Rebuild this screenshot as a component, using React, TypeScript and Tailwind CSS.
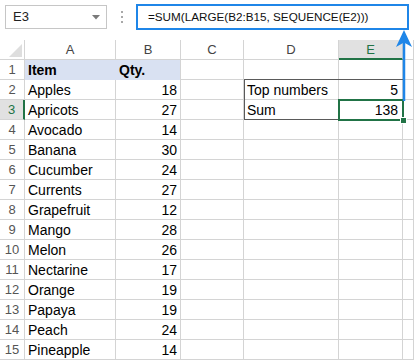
import React from "react";

const data: [string, string | number][] = [
  ["Apples", 18],
  ["Apricots", 27],
  ["Avocado", 14],
  ["Banana", 30],
  ["Cucumber", 24],
  ["Currents", 27],
  ["Grapefruit", 12],
  ["Mango", 28],
  ["Melon", 26],
  ["Nectarine", 17],
  ["Orange", 19],
  ["Papaya", 19],
  ["Peach", 24],
  ["Pineapple", 14],
];

const cell = "h-[20px] border-r border-b border-[#d4d4d4] leading-[20px] text-[14px] text-black overflow-hidden whitespace-nowrap";

export default function App() {
  const colLetters = ["A", "B", "C", "D", "E", ""];
  return (
    <div className="relative w-[414px] h-[360px] overflow-hidden bg-white font-['Liberation_Sans',Arial,sans-serif]">
      {/* top bar */}
      <div className="h-[40px] flex items-start">
        <div className="ml-[5px] mt-[5px] w-[102px] h-[24px] border border-[#c6c6c6] flex items-center justify-between pl-[7px] pr-[6px]">
          <span className="text-[13px] text-[#222]">E3</span>
          <svg width="8" height="5" viewBox="0 0 8 5">
            <polygon points="0,0 8,0 4,4.5" fill="#7a7a7a" />
          </svg>
        </div>
        <div className="w-[29px] h-[34px] flex flex-col items-center justify-center gap-[3px]">
          <div className="w-[2px] h-[2px] bg-[#a8a8a8]" />
          <div className="w-[2px] h-[2px] bg-[#a8a8a8]" />
          <div className="w-[2px] h-[2px] bg-[#a8a8a8]" />
        </div>
        <div className="mt-[4px] w-[273px] h-[26px] border-2 border-[#1f86e8] flex items-center pl-[10px]">
          <span className="text-[11.7px] text-[#111] whitespace-nowrap">=SUM(LARGE(B2:B15, SEQUENCE(E2)))</span>
        </div>
      </div>

      {/* sheet */}
      <div className="grid grid-cols-[25px_91px_65px_63px_95px_64px_1fr]">
        {/* header row */}
        <div className="h-[20px] border-r border-b border-[#d4d4d4] relative">
          <svg className="absolute left-0 top-0" width="25" height="20" viewBox="0 0 25 20">
            <polygon points="22,4 22,17 9,17" fill="#dedede" />
          </svg>
        </div>
        {colLetters.map((c, i) => (
          <div
            key={i}
            className={
              c === "E"
                ? "h-[20px] border-r border-[#d4d4d4] bg-[#e1e1e1] border-b-2 border-b-[#217346] text-center text-[13px] leading-[19px] text-[#217346]"
                : "h-[20px] border-r border-b border-[#d4d4d4] text-center text-[13px] leading-[20px] text-[#444]"
            }
          >
            {c}
          </div>
        ))}

        {/* row 1 */}
        <div className="h-[20px] border-r border-b border-[#d4d4d4] text-center text-[13px] leading-[20px] text-[#555]">1</div>
        <div className="h-[20px] bg-[#d9e1f2] pl-[3px] leading-[20px] text-[14px] font-bold text-black">Item</div>
        <div className="h-[20px] bg-[#d9e1f2] border-r border-[#d4d4d4] pl-[3px] leading-[20px] text-[14px] font-bold text-black">Qty.</div>
        <div className={cell} />
        <div className={cell} />
        <div className={cell} />
        <div className={cell} />

        {data.map(([name, qty], i) => {
          const r = i + 2;
          const sel = r === 3;
          return (
            <React.Fragment key={r}>
              <div
                className={
                  sel
                    ? "h-[20px] border-r-2 border-r-[#217346] border-b border-[#d4d4d4] bg-[#e1e1e1] text-center text-[13px] leading-[20px] text-[#217346]"
                    : "h-[20px] border-r border-b border-[#d4d4d4] text-center text-[13px] leading-[20px] text-[#555]"
                }
              >
                {r}
              </div>
              <div className={cell + " pl-[3px]"}>{name}</div>
              <div className={cell + " text-right pr-[3px]"}>{qty}</div>
              <div className={cell} />
              <div className={cell + " pl-[3px]"}>{r === 2 ? "Top numbers" : r === 3 ? "Sum" : ""}</div>
              <div className={cell + " text-right pr-[4px]"}>{r === 2 ? 5 : r === 3 ? 138 : ""}</div>
              <div className={cell} />
            </React.Fragment>
          );
        })}
      </div>

      {/* D2:E3 outer border */}
      <div className="absolute left-[244px] top-[79px] w-[160px] h-[41px] border border-[#5a5a5a] pointer-events-none" />
      {/* selection E3 */}
      <div className="absolute left-[338px] top-[99px] w-[66px] h-[22px] border-2 border-[#217346] pointer-events-none" />
      <div className="absolute left-[400px] top-[117px] w-[7px] h-[7px] bg-[#217346] border border-white" />

      {/* arrow */}
      <svg className="absolute left-[394px] top-[29px]" width="20" height="74" viewBox="0 0 20 74">
        <line x1="10" y1="10" x2="10" y2="72" stroke="#1f86e8" strokeWidth="2.5" />
        <polygon points="10,1 18,18 10,13.5 2,18" fill="#1f86e8" />
      </svg>
    </div>
  );
}
